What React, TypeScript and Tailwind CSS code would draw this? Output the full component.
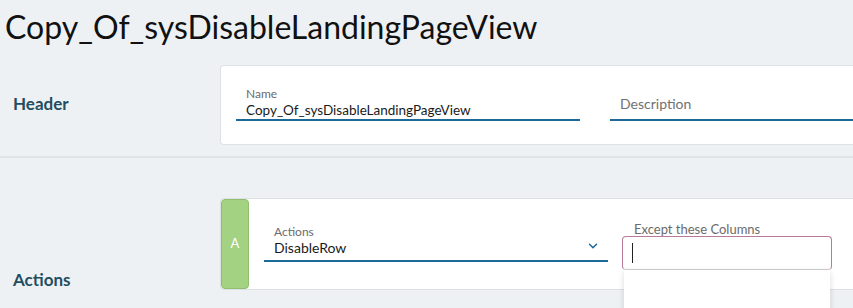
import { ChevronDown } from 'lucide-react';

const font = { fontFamily: 'Lato, "Noto Sans", sans-serif' };

function UnderlineField({ label, value, width }: { label: string; value?: string; width: string }) {
  return (
    <div className={`${width} flex flex-col border-b-2 border-[#1b6a9a]`}>
      {value ? (
        <>
          <span className="pl-[10px] text-[12px] leading-[14px] text-[#6b6b6b]">{label}</span>
          <span className="pl-[10px] text-[13.5px] leading-[18px] text-[#1a1a1a]">{value}</span>
        </>
      ) : (
        <span className="pl-[10px] pb-[6px] pt-[8px] text-[14px] leading-[18px] text-[#707070]">{label}</span>
      )}
    </div>
  );
}

export default function App() {
  return (
    <div className="h-[308px] w-[853px] overflow-hidden bg-[#eef1f4]" style={font}>
      <h1 className="h-[56px] pl-[5px] text-[32px] leading-[54px] text-[#111]">Copy_Of_sysDisableLandingPageView</h1>

      <section className="flex border-b-2 border-[#dfe3e7] pb-[11px]">
        <div className="flex w-[220px] items-center pl-[13px] pt-[6px] text-[17px] font-bold text-[#1f4e61]">Header</div>
        <div className="mt-[9px] flex h-[80px] flex-1 items-start gap-[30px] rounded-l-[4px] border border-r-0 border-[#dde1e5] bg-white pl-[15px] pt-[21px]">
          <UnderlineField label="Name" value="Copy_Of_sysDisableLandingPageView" width="w-[344px]" />
          <UnderlineField label="Description" width="flex-1" />
        </div>
      </section>

      <section className="flex pt-[40px]">
        <div className="flex w-[220px] items-end pl-[13px] text-[17px] font-bold leading-[20px] text-[#1f4e61]">Actions</div>
        <div className="relative flex h-[92px] flex-1 rounded-l-[4px] border border-r-0 border-[#dde1e5] bg-white">
          <div className="flex w-[28px] items-center justify-center rounded-[4px] border border-[#8fbf6e] bg-[#a3d283] text-[13px] text-white">A</div>
          <div className="flex items-start pl-[15px] pt-[22px]">
            <div className="relative mt-[4px] flex w-[344px] flex-col border-b-2 border-[#1b6a9a]">
              <span className="pl-[10px] text-[12px] leading-[14px] text-[#6b6b6b]">Actions</span>
              <span className="pl-[10px] pb-[3px] text-[14px] leading-[18px] text-[#1a1a1a]">DisableRow</span>
              <ChevronDown className="absolute right-[8px] top-[14px] h-[14px] w-[14px] text-[#1b6a9a]" strokeWidth={2.5} />
            </div>
            <div className="relative ml-[14px] mt-[2px] flex w-[210px] flex-col">
              <span className="pl-[12px] text-[13px] leading-[13px] text-[#6b6b6b]">Except these Columns</span>
              <div className="flex h-[34px] items-center rounded-[4px] border border-[#b87a9c] border-b-[#cfcfcf] pl-[9px]">
                <span className="h-[20px] w-px bg-[#222]" />
              </div>
              <div className="absolute left-[2px] right-[2px] top-[47px] h-[60px] bg-white shadow-[0_2px_6px_rgba(0,0,0,0.15)]" />
            </div>
          </div>
        </div>
      </section>
    </div>
  );
}
